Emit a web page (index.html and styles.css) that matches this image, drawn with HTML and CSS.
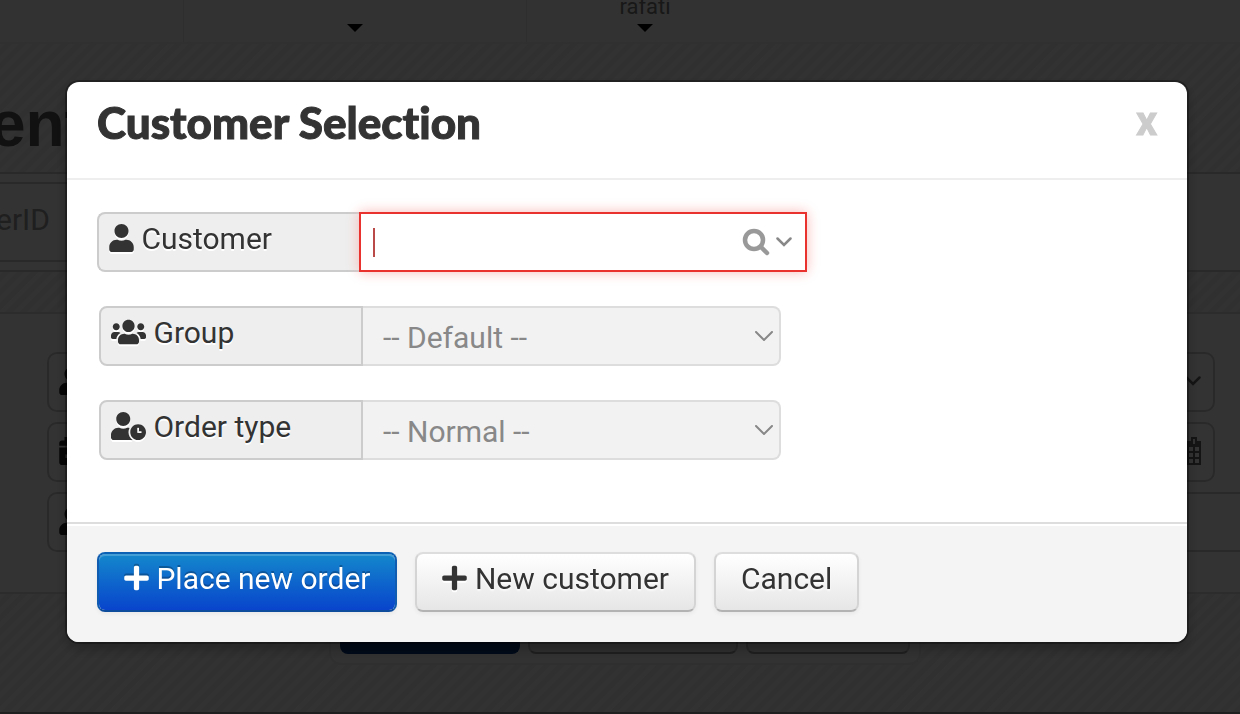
FILE: index.html
```html
<!DOCTYPE html>
<html lang="en">
<head>
  <meta charset="UTF-8">
  <title>Customer Selection</title>
  <link rel="stylesheet" href="styles.css">
</head>
<body>
  <svg class="sprite" aria-hidden="true">
    <symbol id="user" viewBox="0 0 448 512"><path d="M224 256c70.7 0 128-57.3 128-128S294.7 0 224 0 96 57.3 96 128s57.3 128 128 128zm89.6 32h-16.7c-22.2 10.2-46.9 16-72.9 16s-50.6-5.8-72.9-16h-16.7C60.2 288 0 348.2 0 422.4V464c0 26.5 21.5 48 48 48h352c26.5 0 48-21.5 48-48v-41.6c0-74.2-60.2-134.4-134.4-134.4z"/></symbol>
    <symbol id="users" viewBox="0 0 640 512"><path d="M96 224c35.3 0 64-28.7 64-64s-28.7-64-64-64-64 28.7-64 64 28.7 64 64 64zm448 0c35.3 0 64-28.7 64-64s-28.7-64-64-64-64 28.7-64 64 28.7 64 64 64zm32 32h-64c-17.6 0-33.5 7.1-45.1 18.6 40.3 22.1 68.9 62 75.1 109.4h66c17.7 0 32-14.3 32-32v-32c0-35.3-28.7-64-64-64zm-256 0c61.9 0 112-50.1 112-112S381.9 32 320 32 208 82.1 208 144s50.1 112 112 112zm76.8 32h-8.3c-20.8 10-43.9 16-68.5 16s-47.6-6-68.5-16h-8.3C179.6 288 128 339.6 128 403.2V432c0 26.5 21.5 48 48 48h288c26.5 0 48-21.5 48-48v-28.8c0-63.6-51.6-115.2-115.2-115.2zm-223.7-13.4C161.5 263.1 145.6 256 128 256H64c-35.3 0-64 28.7-64 64v32c0 17.7 14.3 32 32 32h65.9c6.3-47.4 34.9-87.3 75.2-109.4z"/></symbol>
    <symbol id="user-clock" viewBox="0 0 640 512"><path d="M496 224c-79.6 0-144 64.4-144 144s64.4 144 144 144 144-64.4 144-144-64.4-144-144-144zm64 150.3c0 5.3-4.4 9.7-9.7 9.7h-60.6c-5.3 0-9.7-4.4-9.7-9.7v-76.6c0-5.3 4.4-9.7 9.7-9.7h12.6c5.3 0 9.7 4.4 9.7 9.7V352h38.3c5.3 0 9.7 4.4 9.7 9.7v12.6zM320 368c0-27.8 6.7-54.1 18.2-77.5-8-1.5-16.2-2.5-24.6-2.5h-16.7c-22.2 10.2-46.9 16-72.9 16s-50.6-5.8-72.9-16h-16.7C60.2 288 0 348.2 0 422.4V464c0 26.5 21.5 48 48 48h347.1c-45.3-31.9-75.1-84.5-75.1-144zm-96-112c70.7 0 128-57.3 128-128S294.7 0 224 0 96 57.3 96 128s57.3 128 128 128z"/></symbol>
    <symbol id="plus" viewBox="0 0 448 512"><path d="M416 208H272V64c0-17.700-14.300-32-32-32h-32c-17.700 0-32 14.300-32 32v144H32c-17.700 0-32 14.300-32 32v32c0 17.700 14.300 32 32 32h144v144c0 17.700 14.300 32 32 32h32c17.700 0 32-14.300 32-32V304h144c17.700 0 32-14.300 32-32v-32c0-17.700-14.300-32-32-32z"/></symbol>
    <symbol id="calendar-solid" viewBox="0 0 448 512"><path d="M96 0h64v64h128V0h64v64h48c26 0 48 22 48 48v48H0v-48c0-26 22-48 48-48h48zM0 192h448v272c0 26-22 48-48 48H48c-26 0-48-22-48-48zm112 128v64h64v-64z"/></symbol>
    <symbol id="calendar" viewBox="0 0 26 28"><path fill-rule="evenodd" d="M0 4h4V0h6v4h6V0h6v4h4v24H0zM6 2v5h2V2zm12 0v5h2V2zM2 10v4h4v-4zm6 0v4h4v-4zm6 0v4h4v-4zm6 0v4h4v-4zM2 16v4h4v-4zm6 0v4h4v-4zm6 0v4h4v-4zm6 0v4h4v-4zM2 22v4h4v-4zm6 0v4h4v-4zm6 0v4h4v-4zm6 0v4h4v-4z"/></symbol>
    <symbol id="chevron" viewBox="0 0 18 10"><path d="M1 1l8 8 8-8" fill="none" stroke="currentColor" stroke-width="2" stroke-linecap="round"/></symbol>
    <symbol id="chevron-bold" viewBox="0 0 16 10"><path d="M1.500 1.500l6.500 6.500 6.500-6.500" fill="none" stroke="currentColor" stroke-width="2.500" stroke-linecap="round"/></symbol>
    <symbol id="search" viewBox="0 0 28 28"><path d="M19 19l6 6" stroke="currentColor" stroke-width="4.500" stroke-linecap="round"/><circle cx="12" cy="12" r="9" fill="none" stroke="currentColor" stroke-width="4.500"/></symbol>
  </svg>

  <!-- page behind the dialog -->
  <div class="page">
    <nav class="topnav">
      <div class="nav-cell nav-first"></div>
      <div class="nav-cell nav-menu"><span class="caret"></span></div>
      <div class="nav-cell nav-user"><span>rafati</span><span class="caret"></span></div>
    </nav>
    <header class="hero">ent</header>
    <div class="filter">
      <input class="filter-input" type="text" value="erID" aria-label="Order ID">
    </div>
    <main class="panel">
      <div class="row">
        <svg class="icon"><use href="#user"/></svg>
        <svg class="chevron-sm"><use href="#chevron-bold"/></svg>
      </div>
      <div class="row">
        <svg class="icon"><use href="#calendar-solid"/></svg>
        <svg class="icon-cal"><use href="#calendar"/></svg>
      </div>
      <div class="row row-wide">
        <svg class="icon"><use href="#user"/></svg>
      </div>
    </main>
    <div class="actions">
      <div class="action action-main"></div>
      <div class="action action-mid"></div>
      <div class="action action-last"></div>
    </div>
  </div>

  <div class="backdrop">
    <form class="modal" role="dialog" aria-labelledby="modal-title">
      <div class="modal-header">
        <h3 id="modal-title">Customer Selection</h3>
        <button type="button" class="close" aria-label="Close">X</button>
      </div>
      <div class="modal-body">
        <div class="field field-customer">
          <label class="addon" for="customer"><svg class="icon"><use href="#user"/></svg> Customer</label>
          <div class="combo">
            <span class="cursor"></span>
            <input id="customer" type="text">
            <svg class="icon-search"><use href="#search"/></svg>
            <svg class="chevron-sm"><use href="#chevron-bold"/></svg>
          </div>
        </div>
        <div class="field">
          <label class="addon" for="group"><svg class="icon icon-wide"><use href="#users"/></svg> Group</label>
          <div class="select">
            <select id="group" disabled><option>-- Default --</option></select>
            <svg class="chevron"><use href="#chevron"/></svg>
          </div>
        </div>
        <div class="field">
          <label class="addon" for="type"><svg class="icon icon-wide"><use href="#user-clock"/></svg> Order type</label>
          <div class="select">
            <select id="type" disabled><option>-- Normal --</option></select>
            <svg class="chevron"><use href="#chevron"/></svg>
          </div>
        </div>
      </div>
      <div class="modal-footer">
        <button type="button" class="btn btn-primary"><svg class="icon"><use href="#plus"/></svg> Place new order</button>
        <button type="button" class="btn"><svg class="icon"><use href="#plus"/></svg> New customer</button>
        <button type="button" class="btn">Cancel</button>
      </div>
    </form>
  </div>
</body>
</html>
```
FILE: styles.css
```css
* {
  box-sizing: border-box;
}

body {
  margin: 0;
  height: 100vh;
  overflow: hidden;
  font-family: Roboto, Arial, sans-serif;
  font-size: 30px;
  line-height: 40px;
  color: #333;
}

input, select, button {
  font: inherit;
  color: inherit;
  margin: 0;
}

svg {
  flex: none;
  fill: currentColor;
}

.sprite {
  display: none;
}

.icon {
  width: 25px;
  height: 28px;
  vertical-align: -3px;
}

.icon-wide {
  width: 35px;
}

.icon-cal {
  width: 26px;
  height: 28px;
}

.chevron {
  width: 18px;
  height: 10px;
}

.chevron-sm {
  width: 16px;
  height: 10px;
}

/* Page behind the dialog */
.page {
  display: flex;
  flex-direction: column;
  height: 100vh;
  overflow: hidden;
  border-bottom: 2px solid #999;
  background: repeating-linear-gradient(135deg, #f8f8f8 0 4px, #efefef 5px 9px, #f8f8f8 10px);
}

.topnav {
  display: flex;
  flex: none;
  height: 44px;
  background: #fafafa;
  border-bottom: 2px solid #eee;
}

.nav-cell {
  display: flex;
  flex-direction: column;
  justify-content: flex-end;
  align-items: center;
  padding-bottom: 10px;
  border-right: 1px solid #e4e4e4;
}

.nav-first {
  width: 184px;
}

.nav-menu {
  width: 343px;
}

.nav-user {
  width: 236px;
  border-right: 0;
  font-size: 22px;
  line-height: 26px;
  color: #777;
}

.nav-user .caret {
  margin-top: 4px;
}

.caret {
  border: 8px solid transparent;
  border-top-color: #000;
  border-bottom: 0;
}

.hero {
  flex: none;
  height: 128px;
  margin-left: -10px;
  padding-top: 44px;
  font: bold 64px/72px "Liberation Sans", Arial, sans-serif;
  color: #555;
}

.filter {
  flex: none;
  padding: 8px 0;
  background: #fff;
  border-top: 2px solid #ccc;
  border-bottom: 2px solid #ccc;
}

.filter-input {
  display: block;
  width: 60%;
  height: 80px;
  margin-left: -8px;
  padding: 0 0 6px 2px;
  border: 2px solid #ccc;
  background: #fff;
  color: #999;
}

.panel {
  display: grid;
  flex: none;
  gap: 10px;
  margin-top: 40px;
  padding: 38px 0 40px 47px;
  background: #fff;
  border-top: 2px solid #ddd;
  border-bottom: 2px solid #ddd;
}

.row {
  display: flex;
  justify-content: space-between;
  align-items: center;
  height: 60px;
  margin-right: 25px;
  padding: 0 12px 2px 10px;
  border: 2px solid #ccc;
  border-radius: 10px;
}

.row .icon {
  color: #222;
}

.row .chevron-sm, .row .icon-cal {
  color: #666;
}

.row-wide {
  margin-right: 0;
  border-right: 0;
  border-radius: 10px 0 0 10px;
}

.actions {
  display: flex;
  flex: none;
  align-self: flex-start;
  gap: 8px;
  width: 592px;
  height: 71px;
  margin-left: 329px;
  padding: 0 9px 9px;
  background: #f8f8f8;
  border: 2px solid #eaeaea;
  border-top: 0;
  border-radius: 0 0 12px 12px;
}

.action {
  flex: 210;
  border: 2px solid #c4c4c4;
  border-top: 0;
  border-bottom-color: #999;
  border-radius: 0 0 8px 8px;
  background: #e6e6e6;
}

.action-main {
  flex: 180;
  background: #00307a;
  border-color: #00307a;
}

.action-last {
  flex: 164;
}

/* Dialog */
.backdrop {
  position: fixed;
  inset: 0;
  padding: 82px 53px 72px 67px;
  background: rgba(0, 0, 0, 0.8);
}

.modal {
  background: #fff;
  border-radius: 12px;
  box-shadow: 0 0 0 2px rgba(0, 0, 0, 0.3), 0 6px 14px rgba(0, 0, 0, 0.3);
}

.modal-header {
  display: flex;
  justify-content: space-between;
  align-items: flex-start;
  height: 98px;
  padding: 10px 30px;
  border-bottom: 2px solid #eee;
}

.modal-header h3 {
  margin: 0;
  font: 900 44px/60px Lato, sans-serif;
  font-variant-ligatures: none;
  -webkit-text-stroke: 1px #333;
}

.close {
  padding: 8px 0;
  border: 0;
  background: none;
  font-size: 32px;
  font-weight: 900;
  line-height: 48px;
  color: #ccc;
  -webkit-text-stroke: 1px #ccc;
}

.modal-body {
  display: grid;
  gap: 34px;
  padding: 32px 30px 62px;
}

.field {
  display: flex;
  height: 60px;
  padding-left: 2px;
}

.field-customer {
  padding-left: 0;
}

.addon {
  width: 264px;
  padding: 5px 10px;
  background: #eee;
  border: 2px solid #ccc;
  border-radius: 8px 0 0 8px;
  text-shadow: 0 2px 0 #fff;
}

.addon .icon, .btn .icon {
  filter: drop-shadow(0 2px 0 #fff);
}

.field-customer .addon {
  width: 262px;
  border-right: 0;
}

.combo {
  display: flex;
  align-items: center;
  width: 448px;
  padding: 0 13px 0 12px;
  background: #fff;
  border: 2px solid #e9322d;
  box-shadow: 0 0 12px #f8b9b7;
}

.combo input {
  flex: 1;
  min-width: 0;
  border: 0;
  outline: 0;
  background: none;
}

.cursor {
  width: 2px;
  height: 29px;
  background: #b94a48;
}

.icon-search {
  width: 28px;
  height: 28px;
  margin-right: 6px;
  color: #999;
}

.combo .chevron-sm {
  color: #888;
}

.select {
  display: grid;
  align-items: center;
  justify-items: end;
  width: 418px;
  padding-right: 6px;
  background: #f2f2f2;
  border: 2px solid #ddd;
  border-left: 0;
  border-radius: 0 8px 8px 0;
  color: #888;
}

.select select, .select .chevron {
  grid-area: 1 / 1;
}

.select select {
  width: 100%;
  height: 56px;
  padding: 3px 20px 0;
  border: 0;
  background: none;
  appearance: none;
  opacity: 1;
}

.modal-footer {
  display: flex;
  gap: 18px;
  padding: 28px 30px 30px;
  background: #f4f4f4;
  border-top: 2px solid #ddd;
  border-radius: 0 0 12px 12px;
  box-shadow: inset 0 2px 0 #fff;
}

.btn {
  height: 60px;
  padding: 0 25px 6px;
  border: 2px solid #d4d4d4;
  border-top-color: #ddd;
  border-bottom-color: #b3b3b3;
  border-radius: 8px;
  background: linear-gradient(#fff, #e6e6e6) padding-box;
  box-shadow: 0 2px 4px rgba(0, 0, 0, 0.05);
  text-shadow: 0 2px 2px rgba(255, 255, 255, 0.75);
}

.btn-primary {
  color: #fff;
  background: linear-gradient(#1488cc, #0844cc) padding-box;
  border-color: #0b62b4 #0f5cb0 #0d4c9c;
  box-shadow: inset 0 2px 0 rgba(255, 255, 255, 0.2), 0 2px 4px rgba(0, 0, 0, 0.05);
  text-shadow: 0 -2px 0 rgba(0, 0, 0, 0.25);
}

.btn-primary .icon {
  filter: drop-shadow(0 -2px 0 rgba(0, 0, 0, 0.25));
}
```
